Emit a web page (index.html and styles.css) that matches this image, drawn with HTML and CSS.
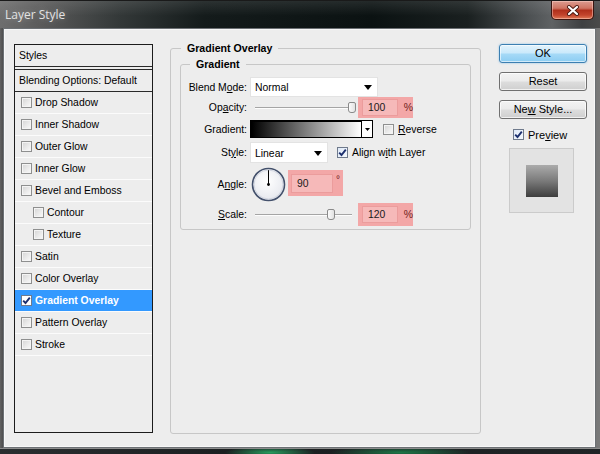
FILE: index.html
```html
<!DOCTYPE html>
<html>
<head>
<meta charset="utf-8">
<link rel="stylesheet" href="styles.css">
</head>
<body>
<div class="window">
  <div class="titlebar">
    <span class="title">Layer Style</span>
    <div class="close">
      <svg width="14" height="11" viewBox="0 0 14 11"><path d="M3 2 L11 9 M11 2 L3 9" stroke="#4a1a12" stroke-width="4" stroke-linecap="round"/><path d="M3 2 L11 9 M11 2 L3 9" stroke="#fff" stroke-width="2.2" stroke-linecap="round"/></svg>
    </div>
  </div>
  <div class="client">
    <div class="styles">
      <div class="list-head">Styles</div>
      <div class="list-blend">Blending Options: Default</div>
      <div class="item"><span class="cb"></span>Drop Shadow</div>
      <div class="item"><span class="cb"></span>Inner Shadow</div>
      <div class="item"><span class="cb"></span>Outer Glow</div>
      <div class="item"><span class="cb"></span>Inner Glow</div>
      <div class="item"><span class="cb"></span>Bevel and Emboss</div>
      <div class="item sub"><span class="cb"></span>Contour</div>
      <div class="item sub"><span class="cb"></span>Texture</div>
      <div class="item"><span class="cb"></span>Satin</div>
      <div class="item"><span class="cb"></span>Color Overlay</div>
      <div class="item selected"><span class="cb on"><svg width="9" height="9" viewBox="0 0 9 9"><path d="M1.2 4.6 L3.5 7 L7.8 1.6" fill="none" stroke="#1c2f6e" stroke-width="1.9"/></svg></span>Gradient Overlay</div>
      <div class="item"><span class="cb"></span>Pattern Overlay</div>
      <div class="item"><span class="cb"></span>Stroke</div>
    </div>

    <fieldset class="group outer">
      <legend>Gradient Overlay</legend>
      <fieldset class="group inner">
        <legend>Gradient</legend>
        <div class="form">
          <span class="lbl">Blend M<u>o</u>de:</span>
          <div class="ctl">
            <div class="select wide"><span>Normal</span><svg width="8" height="5" viewBox="0 0 8 5"><path d="M0 0 H8 L4 5 Z" fill="#000"/></svg></div>
          </div>

          <span class="lbl">Op<u>a</u>city:</span>
          <div class="ctl">
            <div class="slider"><span class="thumb" style="left:93px"></span></div>
            <div class="pink"><span class="num">100</span><span class="unit">%</span></div>
          </div>

          <span class="lbl">Gradient:</span>
          <div class="ctl">
            <div class="swatch"><span class="grad"></span><span class="swatch-btn"><svg width="5" height="3" viewBox="0 0 5 3"><path d="M0 0 H5 L2.5 3 Z" fill="#000"/></svg></span></div>
            <label class="check rev"><span class="cb"></span><span><u>R</u>everse</span></label>
          </div>

          <span class="lbl">St<u>y</u>le:</span>
          <div class="ctl">
            <div class="select narrow"><span>Linear</span><svg width="8" height="5" viewBox="0 0 8 5"><path d="M0 0 H8 L4 5 Z" fill="#000"/></svg></div>
            <label class="check align"><span class="cb on blue"><svg width="9" height="9" viewBox="0 0 9 9"><path d="M1.2 4.6 L3.5 7 L7.8 1.6" fill="none" stroke="#1c2f6e" stroke-width="1.9"/></svg></span><span>Align w<u>i</u>th Layer</span></label>
          </div>

          <span class="lbl">A<u>n</u>gle:</span>
          <div class="ctl">
            <svg class="dial" width="35" height="35" viewBox="0 0 35 35">
              <defs><radialGradient id="dg" cx="45%" cy="40%" r="60%"><stop offset="0" stop-color="#ffffff"/><stop offset="1" stop-color="#e6e8ee"/></radialGradient></defs>
              <circle cx="17.5" cy="17.5" r="16" fill="url(#dg)" stroke="#44516c" stroke-width="1.6"/>
              <circle cx="17.5" cy="17.5" r="14.5" fill="none" stroke="#c9cedb" stroke-width="0.8"/>
              <line x1="17.5" y1="17.5" x2="17.5" y2="3.2" stroke="#000" stroke-width="1"/>
              <circle cx="17.5" cy="17.5" r="1.4" fill="#000"/>
            </svg>
            <div class="pink angle"><span class="num wide">90</span><span class="deg">°</span></div>
          </div>

          <span class="lbl"><u>S</u>cale:</span>
          <div class="ctl">
            <div class="slider"><span class="thumb" style="left:72px"></span></div>
            <div class="pink tall"><span class="num">120</span><span class="unit">%</span></div>
          </div>
        </div>
      </fieldset>
    </fieldset>

    <div class="buttons">
      <div class="btn ok">OK</div>
      <div class="btn">Reset</div>
      <div class="btn">Ne<u>w</u> Style...</div>
      <label class="check preview"><span class="cb on blue"><svg width="9" height="9" viewBox="0 0 9 9"><path d="M1.2 4.6 L3.5 7 L7.8 1.6" fill="none" stroke="#1c2f6e" stroke-width="1.9"/></svg></span><span>Pre<u>v</u>iew</span></label>
      <div class="preview-box"><div class="preview-swatch"></div></div>
    </div>
  </div>
  <div class="desktop"></div>
</div>
</body>
</html>
```
FILE: styles.css
```css
* { box-sizing: border-box; }
body {
  margin: 0;
  width: 600px;
  height: 454px;
  overflow: hidden;
  background: #111;
  font-family: "Liberation Sans", Arial, sans-serif;
  font-size: 10.4px;
  color: #000;
}
u { text-decoration: underline; text-underline-offset: 1px; }

.window {
  width: 600px;
  height: 454px;
  display: flex;
  flex-direction: column;
  background: linear-gradient(to right, #626262 0, #3a3a3a 1%, #1c2020 30%, #121818 70%, #555859 92%, #7a7a7a 100%);
}

.titlebar {
  height: 28px;
  flex: none;
  display: flex;
  justify-content: space-between;
  align-items: flex-start;
  border-top: 1px solid #1a1a1a;
  background:
    linear-gradient(to bottom, rgba(255,255,255,0.10), rgba(255,255,255,0) 55%),
    linear-gradient(to right, #6e6e6e 0%, #5a5a5a 7%, #333838 20%, #141b1b 34%, #0b1212 62%, #1a2020 78%, #4c5052 88%, #5f6264 92%, #3e4042 97%, #4a4a4a 100%);
}
.title {
  padding-left: 5px;
  line-height: 27px;
  font-family: "Open Sans", "Liberation Sans", sans-serif;
  font-size: 12px;
  color: #e2e2e2;
  text-shadow: 0 0 6px rgba(255,255,255,0.35);
}
.close {
  width: 43px;
  height: 19px;
  margin-right: 6px;
  border: 1px solid #3b1510;
  border-top: none;
  border-radius: 0 0 5px 5px;
  background: linear-gradient(to bottom, #dc9c90 0%, #cf7462 40%, #b0301c 52%, #c2442c 78%, #e07a58 100%);
  box-shadow: inset 0 0 0 1px rgba(255,220,210,0.45);
  display: flex;
  align-items: center;
  justify-content: center;
}

.client {
  width: 593px;
  height: 420px;
  margin-left: 3px;
  flex: none;
  border: 1px solid #6c7074;
  box-shadow: inset 0 0 0 1px #f7f7f7;
  background: #ededed;
  display: flex;
  align-items: flex-start;
  padding: 12px 0 0 10px;
}

/* styles list */
.styles {
  width: 139px;
  height: 389px;
  margin-top: 3px;
  border: 1px solid #1c1c1c;
  background: #ededed;
  display: flex;
  flex-direction: column;
}
.list-head {
  height: 22px;
  line-height: 21px;
  padding-left: 4px;
  border-bottom: 1px solid #2a2a2a;
}
.list-blend {
  height: 23px;
  margin-top: 2px;
  line-height: 21px;
  padding-left: 4px;
  border-top: 1px solid #2a2a2a;
  border-bottom: 1px solid #2a2a2a;
}
.item {
  height: 22px;
  display: flex;
  align-items: center;
  gap: 3px;
  padding: 0 0 1px 6px;
  border-bottom: 1px solid #fbfbfb;
}
.item.sub { padding-left: 18px; }
.item.selected {
  background: #3399ff;
  color: #fff;
  font-weight: bold;
}

.cb {
  width: 11px;
  height: 11px;
  flex: none;
  border: 1px solid #8e8f8f;
  background: linear-gradient(135deg, #d4d4d4 0%, #ececec 60%, #fafafa 100%);
  box-shadow: inset 0 0 0 1px #f4f4f4;
  display: flex;
  align-items: center;
  justify-content: center;
}
.cb.on { background: #fff; box-shadow: none; border-color: #6f7a8c; }
.cb.blue { background: linear-gradient(135deg, #dfe9f7, #f4f8fd); }

/* group boxes */
fieldset.group {
  margin: 0;
  min-width: 0;
  border: 1px solid #c7c7c7;
  border-radius: 3px;
}
fieldset.group legend {
  padding: 0 6px;
  line-height: 14px;
  font-weight: bold;
  font-size: 10.6px;
}
fieldset.outer {
  width: 311px;
  height: 393px;
  margin-left: 17px;
  padding: 2px 9px 0 9px;
}
fieldset.outer > legend { margin-left: 1px; }
fieldset.inner {
  padding: 6px 0 3px 0;
}
fieldset.inner > legend { margin-left: 9px; }

.form {
  display: grid;
  grid-template-columns: 66px auto;
  grid-template-rows: 20px 21px 22px 25px 38px 23px;
  column-gap: 3px;
  align-items: center;
}
.lbl { text-align: right; white-space: nowrap; }
.ctl {
  display: flex;
  align-items: center;
  height: 100%;
}

.select {
  height: 20px;
  background: #fff;
  border: 1px solid #e3e3e3;
  display: flex;
  align-items: center;
  justify-content: space-between;
  padding: 1px 5px 0 4px;
}
.select.wide { width: 128px; }
.select.narrow { width: 78px; height: 21px; }

.slider {
  position: relative;
  width: 97px;
  height: 13px;
  margin-left: 5px;
  background: linear-gradient(to bottom, transparent 6px, #a5a5a5 6px, #a5a5a5 7px, #fdfdfd 7px, #fdfdfd 8px, transparent 8px);
}
.thumb {
  position: absolute;
  top: 1px;
  width: 8px;
  height: 11px;
  border: 1px solid #8a8a8a;
  border-radius: 2px 2px 3px 3px;
  background: linear-gradient(to right, #fbfbfb, #e2e2e2);
}

.pink {
  width: 55px;
  height: 21px;
  margin-left: 6px;
  background: #f3a7a7;
  display: flex;
  align-items: center;
  padding-left: 4px;
}
.pink.tall { height: 23px; }
.pink.angle { width: 55px; height: 26px; margin-left: 2px; margin-top: -2px; padding-left: 3px; }
.num {
  width: 37px;
  height: 17px;
  background: #f6b9b9;
  border: 1px solid #eb9c9c;
  padding-left: 5px;
  line-height: 15px;
  color: #1a1a1a;
}
.num.wide { width: 42px; height: 19px; line-height: 17px; }
.unit { margin-left: 6px; color: #6e1c1c; }
.deg { margin-left: 3px; margin-top: -7px; color: #6e1c1c; font-size: 10px; }

.swatch {
  width: 123px;
  height: 18px;
  border: 1px solid #000;
  box-shadow: inset 1px 1px 0 #000;
  display: flex;
  background: #fff;
}
.grad { flex: 1; background: linear-gradient(to right, #000 0%, #fff 100%); margin: 1px 0 0 1px; }
.swatch-btn {
  width: 11px;
  border-left: 1px solid #000;
  display: flex;
  align-items: center;
  justify-content: center;
  background: #fff;
}

.check {
  display: flex;
  align-items: center;
  gap: 4px;
}
.check.rev { margin-left: 10px; }
.check.align { margin-left: 9px; }
.dial { margin-left: 1px; margin-top: 1px; }

/* right column */
.buttons {
  width: 88px;
  margin-left: 18px;
  margin-top: 3px;
  display: flex;
  flex-direction: column;
}
.btn {
  height: 19px;
  margin-bottom: 9px;
  border: 1px solid #707070;
  border-radius: 3px;
  background: linear-gradient(to bottom, #f3f3f3 0%, #ebebeb 48%, #dddddd 52%, #cfcfcf 100%);
  box-shadow: inset 0 0 0 1px rgba(255,255,255,0.7);
  text-align: center;
  line-height: 17px;
  font-size: 11px;
}
.btn.ok {
  border-color: #3c7fb1;
  background: linear-gradient(to bottom, #e3f3fc 0%, #c9e9fb 48%, #a6daf7 52%, #8ccdf2 100%);
  box-shadow: inset 0 0 0 1px rgba(255,255,255,0.6), 0 0 2px rgba(60,160,230,0.6);
}
.check.preview {
  padding-left: 14px;
  height: 13px;
  font-size: 11px;
}
.preview-box {
  width: 65px;
  height: 65px;
  margin: 7px 0 0 10px;
  border: 1px solid #cbcbcb;
  background: #e3e3e3;
  display: flex;
  align-items: center;
  justify-content: center;
}
.preview-swatch {
  width: 32px;
  height: 32px;
  background: linear-gradient(to bottom, #ababab 0%, #7a7a7a 50%, #3d3d3d 100%);
}

.desktop {
  flex: 1;
  border-top: 1px solid #8c8c8c;
  background:
    radial-gradient(ellipse 45px 6px at 270px 70%, rgba(40,170,100,0.9), rgba(40,170,100,0) 100%),
    radial-gradient(ellipse 70px 6px at 400px 70%, rgba(30,140,80,0.8), rgba(30,140,80,0) 100%),
    linear-gradient(to right, #2a2e30, #1a1e20 40%, #202426 100%);
}
```
